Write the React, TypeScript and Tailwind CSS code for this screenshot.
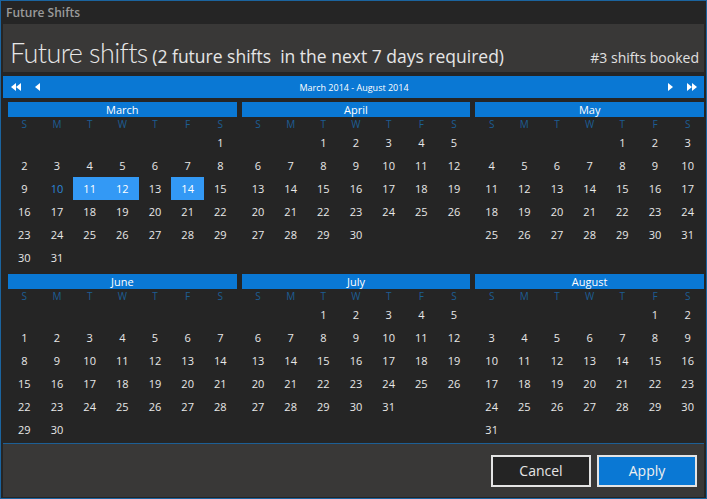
import React from "react";

type Month = { name: string; offset: number; days: number };

// offset = number of blank cells before day 1 (WPF style: if month starts on Sunday, a full blank row)
const months: Month[] = [
  { name: "March", offset: 6, days: 31 },
  { name: "April", offset: 2, days: 30 },
  { name: "May", offset: 4, days: 31 },
  { name: "June", offset: 7, days: 30 },
  { name: "July", offset: 2, days: 31 },
  { name: "August", offset: 5, days: 31 },
];

const dayNames = ["S", "M", "T", "W", "T", "F", "S"];

function MonthView({ m }: { m: Month }) {
  const cells: (number | null)[] = [];
  for (let i = 0; i < 42; i++) {
    const d = i - m.offset + 1;
    cells.push(d >= 1 && d <= m.days ? d : null);
  }
  const isMarch = m.name === "March";
  return (
    <div className="flex flex-col">
      <div className="h-[15px] bg-[#0a78d4] flex items-center justify-center text-[11px] leading-none text-white">
        {m.name}
      </div>
      <div className="grid grid-cols-7 h-[14px] items-center">
        {dayNames.map((d, i) => (
          <div key={i} className="text-center text-[10px] leading-none text-[#1d5d93]">
            {d}
          </div>
        ))}
      </div>
      <div className="grid grid-cols-7">
        {cells.map((d, i) => {
          const sel = isMarch && (d === 11 || d === 12 || d === 14);
          const today = isMarch && d === 10;
          return (
            <div
              key={i}
              className={
                "h-[23px] flex items-center justify-center text-[11px] leading-none " +
                (sel ? "bg-[#3399f5] text-white " : "") +
                (today ? "text-[#2c86d8] " : sel ? "" : "text-[#e8e8e8] ")
              }
            >
              {d ?? ""}
            </div>
          );
        })}
      </div>
    </div>
  );
}

function TriLeft() {
  return (
    <svg width="5" height="8" viewBox="0 0 5 8">
      <path d="M5 0 L0 4 L5 8 Z" fill="white" />
    </svg>
  );
}
function TriRight() {
  return (
    <svg width="5" height="8" viewBox="0 0 5 8">
      <path d="M0 0 L5 4 L0 8 Z" fill="white" />
    </svg>
  );
}

export default function App() {
  return (
    <div
      className="w-[707px] h-[499px] border border-[#1b649f] bg-[#252525] flex flex-col overflow-hidden"
      style={{ fontFamily: '"Open Sans", "Noto Sans", sans-serif' }}
    >
      <div className="h-[23px] flex items-center pl-[5px] text-[12px] font-semibold text-[#9a9a9a]">
        Future Shifts
      </div>
      <div className="flex flex-col flex-1 px-[2px]">
        <div className="h-[48px] bg-[#393837] flex items-end justify-between pl-[7px] pr-[5px] pb-[6px]">
          <div className="text-[#e6e6e6] leading-none whitespace-pre">
            <span
              className="text-[27px] font-light tracking-[-0.6px]"
              style={{ fontFamily: 'Lato, "Open Sans", sans-serif' }}
            >
              Future shifts
            </span>
            <span className="text-[17.5px]"> (2 future shifts  in the next 7 days required)</span>
          </div>
          <div className="text-[14px] leading-none text-[#e0e0e0] pb-[1px]">#3 shifts booked</div>
        </div>
        <div className="mt-[4px] h-[22px] bg-[#0a78d4] flex items-center pl-[8px] pr-[7px]">
          <div className="flex items-center gap-[14px]">
            <div className="flex">
              <TriLeft />
              <TriLeft />
            </div>
            <TriLeft />
          </div>
          <div className="flex-1 text-center text-[9px] text-white leading-none">
            March 2014 - August 2014
          </div>
          <div className="flex items-center gap-[14px]">
            <TriRight />
            <div className="flex">
              <TriRight />
              <TriRight />
            </div>
          </div>
        </div>
        <div className="flex-1 pt-[4px] pl-[5px] grid grid-cols-3 gap-x-[5px] gap-y-[5px] content-start">
          {months.map((m) => (
            <MonthView key={m.name} m={m} />
          ))}
        </div>
        <div className="h-[54px] border-t border-[#1d5f95] bg-[#393837] flex items-center justify-end gap-[6px] pr-[7px] mb-[1px]">
          <button className="w-[100px] h-[32px] border-2 border-[#e4e4e4] bg-[#242424] text-[14px] text-[#e6e6e6]">
            Cancel
          </button>
          <button className="w-[100px] h-[32px] border-2 border-[#e4e4e4] bg-[#0a78d4] text-[14px] text-[#f0f0f0]">
            Apply
          </button>
        </div>
      </div>
    </div>
  );
}
